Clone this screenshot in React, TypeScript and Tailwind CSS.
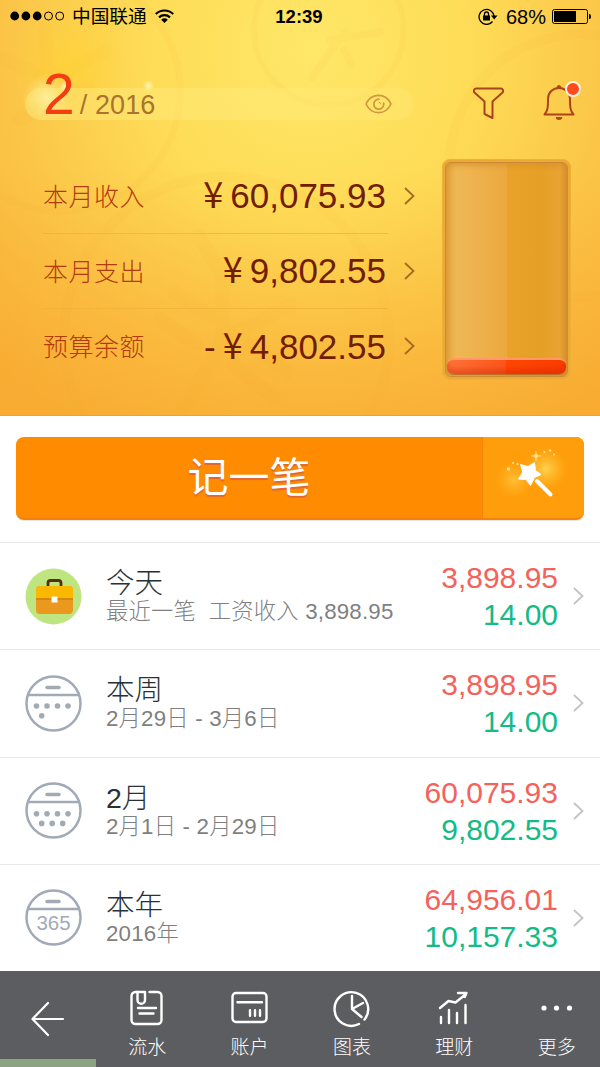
import type { ReactNode } from 'react';

interface SummaryRow {
  label: string;
  amount: string;
  negative?: boolean;
}

interface PeriodRow {
  title: string;
  detail: string;
  income: string;
  expense: string;
  icon: ReactNode;
}

const summary: SummaryRow[] = [
  { label: '本月收入', amount: '60,075.93' },
  { label: '本月支出', amount: '9,802.55' },
  { label: '预算余额', amount: '4,802.55', negative: true },
];

const periods: PeriodRow[] = [
  { title: '今天', detail: '最近一笔  工资收入 3,898.95', income: '3,898.95', expense: '14.00', icon: <BriefcaseIcon /> },
  {
    title: '本周',
    detail: '2月29日 - 3月6日',
    income: '3,898.95',
    expense: '14.00',
    icon: <CalendarIcon dots={[[11.5, 31], [22, 31], [32.5, 31], [43, 31], [16.7, 40.7]]} />,
  },
  {
    title: '2月',
    detail: '2月1日 - 2月29日',
    income: '60,075.93',
    expense: '9,802.55',
    icon: <CalendarIcon dots={[[11.5, 31.7], [22, 31.7], [32.5, 31.7], [43, 31.7], [16.7, 41.4], [27.2, 41.4], [37.7, 41.4]]} />,
  },
  { title: '本年', detail: '2016年', income: '64,956.01', expense: '10,157.33', icon: <CalendarIcon label="365" /> },
];

const tabs: { label: string; icon: ReactNode }[] = [
  {
    label: '流水',
    icon: (
      <>
        <path d="M10.5 4H8.5a4 4 0 0 0-4 4v24a4 4 0 0 0 4 4h22a4 4 0 0 0 4-4V8a4 4 0 0 0-4-4h-8" />
        <path d="M10.5 4h7.500v8a3.500 3.500 0 0 1-7.500 0z" />
        <path d="M11 20h18M12.500 25.500h14" />
      </>
    ),
  },
  {
    label: '账户',
    icon: (
      <>
        <rect x="2.5" y="5" width="34" height="29" rx="3.5" />
        <path d="M7.500 14.300h24.500M20 22.300v5.500M25 22.300v5.500M30 22.300v5.500" />
      </>
    ),
  },
  {
    label: '图表',
    icon: (
      <>
        <path d="M27 36A16.800 16.800 0 1 1 32.500 31.500" />
        <path d="M20 8v13l11-6M20 21l9.500 8" />
      </>
    ),
  },
  {
    label: '理财',
    icon: (
      <>
        <path d="M6 20l8.500-7 7 1.500L32 6M24 5h8.500l-1.700 4" />
        <path d="M7 29v6M15 22v13M23 25v10M31.500 17v18" />
      </>
    ),
  },
  {
    label: '更多',
    icon: (
      <g fill="currentColor" stroke="none">
        <circle cx="7" cy="20" r="2.600" />
        <circle cx="19.500" cy="20" r="2.600" />
        <circle cx="32.500" cy="20" r="2.600" />
      </g>
    ),
  },
];

export default function App() {
  return (
    <div className="flex h-[1067px] w-[600px] flex-col overflow-hidden bg-white font-['Liberation_Sans','Noto_Sans_CJK_SC',sans-serif]">
      <Header />

      {/* Add record */}
      <div className="h-[126px] shrink-0 px-4 pt-[21px]">
        <div className="flex h-[83px] overflow-hidden rounded-lg border-b-2 border-[#f8800c] bg-[#ff8c00] shadow-[0_1px_1px_rgba(0,0,0,0.12)]">
          <button className="flex-1 pt-[2px] text-[41px] leading-none font-normal text-white [text-shadow:0_2px_1px_#df6735]">
            记一笔
          </button>
          <button className="flex w-[102px] items-center justify-center border-l border-[#f48708] bg-[#ff9d0a]">
            <WandIcon />
          </button>
        </div>
      </div>

      <div className="flex shrink-0 flex-col">
        {periods.map((row) => (
          <PeriodItem key={row.title} row={row} />
        ))}
      </div>

      <TabBar />
    </div>
  );
}

function Header() {
  return (
    <div className="relative h-[416px] shrink-0 border-b border-[#f0a22b] bg-[radial-gradient(ellipse_430px_460px_at_310px_50px,#ffe768_0%,#fedc57_38%,#fbc446_72%,#f9b338_100%)]">
      <div className="absolute inset-0 bg-linear-to-b from-transparent from-40% to-[#f79b25]/35" />
      <HeaderPattern />
      <div className="relative">
        <StatusBar />

        <div className="flex h-[103px] pt-[33px] pl-[25px]">
          <div className="mt-[22px] flex h-8 w-[389px] items-center justify-between rounded-full bg-linear-to-r from-[#fff08a]/40 to-[#fff08a]/20 pr-[22px] pl-[18px]">
            <div className="flex items-baseline pt-[5px]">
              <span className="-mt-6 text-[57px] leading-none text-[#f43d14]">2</span>
              <span className="ml-[5px] text-[27px] leading-none tracking-[0.1px] text-[#a9742d]">/ 2016</span>
            </div>
            <svg className="h-5 w-[27px]" viewBox="0 0 27 20" fill="none" stroke="#d1963f" strokeWidth="1.7" strokeLinecap="round">
              <path d="M1 10C6.500-1.500 20.500-1.500 26 10 20.500 21.500 6.500 21.500 1 10z" />
              <path d="M14 5.200a5 5 0 1 0 4.700 4" />
              <path d="M14 8.200a2.500 2.500 0 0 1 1.800 1.800" strokeWidth="1" />
            </svg>
          </div>
          <svg className="mt-[21px] ml-[59px] h-8 w-[31px]" viewBox="0 0 31 32" fill="none" stroke="#ad431c" strokeWidth="2" strokeLinejoin="round">
            <path d="M4 1.500h23a2.500 2.500 0 0 1 2 4.500l-9.500 8.500V31l-8-4V14.500L2 6a2.500 2.500 0 0 1 2-4.500z" />
          </svg>
          <div className="relative mt-[15px] ml-[39px]">
            <svg className="h-10 w-8" viewBox="0 0 32 40" fill="none" stroke="#ad431c" strokeWidth="2" strokeLinejoin="round">
              <path d="M1.500 33.500c3.500-4 3.500-8 3.500-15.500C5 11.500 10 7 16 7s11 4.500 11 11c0 7.500 0 11.500 3.500 15.500z" />
              <path d="M14 6.500a2 2 0 0 1 4 0zM13 36.500h6a3 2 0 0 1-6 0z" fill="#ad431c" stroke="#ad431c" strokeWidth="0.8" />
            </svg>
            <span className="absolute top-0 left-[22px] h-4 w-4 rounded-full border-2 border-[#fff1dc] bg-[#ff4a20]" />
          </div>
        </div>

        <div className="flex pt-[23px] pl-[43px]">
          <div className="w-[345px] divide-y divide-[#eeb036]/70">
            {summary.map((row) => (
              <div key={row.label} className="flex h-[75px] items-center justify-between">
                <span className="pt-[3px] text-[25px] font-light tracking-[0.5px] text-[#b23b10]">{row.label}</span>
                <span className="flex items-center pr-[2px] pb-px text-[35px] leading-none text-[#721d00]">
                  {row.negative && <span className="mr-[7px]">-</span>}
                  <span className="mr-[7px] -mt-[7px] font-['Noto_Sans_CJK_SC',sans-serif] text-[36px] font-normal">¥</span>
                  {row.amount}
                </span>
              </div>
            ))}
          </div>
          <div className="ml-4">
            {summary.map((row) => (
              <div key={row.label} className="flex h-[75px] items-center pb-[2px]">
                <Chevron className="text-[#a46b20]" />
              </div>
            ))}
          </div>
          <BudgetGauge />
        </div>
      </div>
    </div>
  );
}

function HeaderPattern() {
  return (
    <svg className="absolute inset-0 h-full w-full" viewBox="0 0 600 416" fill="none">
      <defs>
        <radialGradient id="flare">
          <stop offset="0" stopColor="#fffbd0" stopOpacity="0.9" />
          <stop offset="1" stopColor="#fff3a0" stopOpacity="0" />
        </radialGradient>
        <radialGradient id="warm">
          <stop offset="0" stopColor="#ffd42d" stopOpacity="0.55" />
          <stop offset="1" stopColor="#ffd42d" stopOpacity="0" />
        </radialGradient>
      </defs>
      <g stroke="#e99b20" strokeOpacity="0.055" strokeWidth="10">
        <circle cx="226" cy="340" r="163" />
        <circle cx="582" cy="166" r="132" />
        <circle cx="329" cy="30" r="75" strokeWidth="6" />
        <circle cx="60" cy="92" r="120" strokeWidth="7" />
      </g>
      <g stroke="#e99b20" strokeOpacity="0.055" strokeLinecap="round" strokeWidth="14">
        <path d="M198 236l24 40v65l-42 75M222 341l68-35M175 294l38 24M160 320l36 25M250 345l38 28M232 365l42 34" />
        <path d="M0 58l60 25M45 65l0-35M60 75l45-24M18 120l70-33" />
        <path d="M312 78l32-45M330 40l50-8M344 50l7 14" strokeWidth="8" />
      </g>
      <circle cx="70" cy="65" r="60" fill="url(#warm)" />
      <circle cx="46" cy="98" r="24" fill="url(#flare)" opacity="0.75" />
      <circle cx="65" cy="87" r="7" fill="url(#flare)" />
      <circle cx="148" cy="86" r="6" fill="url(#flare)" />
    </svg>
  );
}

function StatusBar() {
  return (
    <div className="grid h-[33px] grid-cols-3 items-center px-[10px] text-black">
      <div className="flex items-center">
        <svg className="h-[10px] w-[55px]" viewBox="0 0 55 10" fill="none" stroke="currentColor">
          <circle cx="4.700" cy="5" r="4.400" fill="currentColor" stroke="none" />
          <circle cx="15.900" cy="5" r="4.400" fill="currentColor" stroke="none" />
          <circle cx="27.200" cy="5" r="4.400" fill="currentColor" stroke="none" />
          <circle cx="38.500" cy="5" r="4" />
          <circle cx="49.700" cy="5" r="4" />
        </svg>
        <span className="ml-[7px] pt-[2px] text-[18.700px] leading-none font-normal">中国联通</span>
        <svg className="ml-[8px] h-[14px] w-[19px]" viewBox="0 0 19 14" fill="none" stroke="currentColor" strokeWidth="2.200">
          <path d="M0.800 5a12.500 12.500 0 0 1 17.400 0M4 8.400a8 8 0 0 1 11 0" />
          <path d="M9.500 14L6.200 10.700a4.700 4.700 0 0 1 6.600 0z" fill="currentColor" stroke="none" />
        </svg>
      </div>
      <span className="pt-px pr-[2px] text-center text-[18.500px] leading-none font-bold">12:39</span>
      <div className="-mr-px flex items-center justify-end">
        <svg className="h-[17px] w-5" viewBox="0 0 20 17" fill="none" stroke="currentColor" strokeWidth="1.300">
          <path d="M14.500 13.500A7.500 7.500 0 1 1 16 8" />
          <path d="M13 7.500h6.500l-3.300 4z" fill="currentColor" stroke="none" />
          <rect x="5" y="7.500" width="7" height="5" fill="currentColor" stroke="none" />
          <path d="M6.500 8V6a2 2 0 0 1 4 0v2" />
        </svg>
        <span className="ml-[8px] text-[20px] leading-none">68%</span>
        <svg className="ml-[6px] h-[15px] w-[39px]" viewBox="0 0 39 15" fill="none">
          <rect x="0.500" y="0.500" width="35" height="14" rx="2" stroke="currentColor" />
          <rect x="2" y="2" width="22" height="11" fill="currentColor" />
          <path d="M37 5h0.500a1.500 2.500 0 0 1 0 5H37z" fill="currentColor" />
        </svg>
      </div>
    </div>
  );
}

function BudgetGauge() {
  return (
    <div className="ml-[27px] h-[221px] w-[129px] rounded-lg border border-[#efb03b] bg-[#ebaa35] p-[2px]">
      <div className="flex h-full flex-col justify-end overflow-hidden rounded-md border border-[#d08a35] bg-[linear-gradient(90deg,#e6a743_0%,#efb855_9%,#edb04a_30%,#eba93e_50%,#eaa329_50%,#e69f26_80%,#e9a334_94%,#db9130_100%)] px-px pb-[2px] shadow-[inset_0_1px_7px_#d28d2b]">
        <div className="h-4 rounded-[7px] border-t-2 border-[#ff9a68] bg-[linear-gradient(90deg,#fe7338_0%,#fb551a_50%,#ff4700_50%,#f93d00_100%)] shadow-[inset_0_-5px_5px_rgba(202,25,0,0.35),0_1px_1px_#b66b20]" />
      </div>
    </div>
  );
}

function PeriodItem({ row }: { row: PeriodRow }) {
  return (
    <div className="flex h-[107.250px] items-center border-t-[1.500px] border-[#e9e9e9] pr-4 pl-[25px]">
      <div className="h-[57px] w-[57px]">{row.icon}</div>
      <div className="ml-6 flex-1 pt-px">
        <div className="text-[28.500px] leading-[30px] font-light text-[#283236]">{row.title}</div>
        <div className="text-[22.300px] leading-[27px] font-light tracking-[0.200px] whitespace-pre text-[#7f7f7f]">{row.detail}</div>
      </div>
      <div className="text-right text-[30px] leading-[37px]">
        <div className="text-[#f4625b]">{row.income}</div>
        <div className="text-[#13bb86]">{row.expense}</div>
      </div>
      <Chevron className="ml-[15px] text-[#c3c3c3]" />
    </div>
  );
}

function TabBar() {
  return (
    <div className="relative flex h-24 shrink-0 bg-[#5c5d60] text-white">
      <button className="flex w-24 shrink-0 items-center justify-center">
        <svg className="h-9 w-[34px]" viewBox="0 0 34 36" fill="none" stroke="currentColor" strokeWidth="2.200" strokeLinecap="round" strokeLinejoin="round">
          <path d="M17 2L1.500 18 17 34M2 18h30" />
        </svg>
      </button>
      {tabs.map((tab) => (
        <button key={tab.label} className="flex w-[102.400px] shrink-0 flex-col items-center pt-[17px]">
          <svg className="h-10 w-10" viewBox="0 0 40 40" fill="none" stroke="currentColor" strokeWidth="2.400" strokeLinecap="round" strokeLinejoin="round">
            {tab.icon}
          </svg>
          <span className="mt-[9px] text-[19px] leading-[22px] font-light">{tab.label}</span>
        </button>
      ))}
      <div className="absolute bottom-0 left-0 h-2 w-24 bg-[#8aa381]" />
    </div>
  );
}

function Chevron({ className }: { className: string }) {
  return (
    <svg className={`h-[18px] w-[11px] shrink-0 ${className}`} viewBox="0 0 11 18" fill="none" stroke="currentColor" strokeWidth="1.800">
      <path d="M1 1l8.500 8L1 17" />
    </svg>
  );
}

function CalendarIcon({ dots = [], label }: { dots?: number[][]; label?: string }) {
  return (
    <svg className="h-full w-full" viewBox="0 0 57 57" fill="none" stroke="#a2aab6" strokeWidth="2.500">
      <circle cx="28.500" cy="28.500" r="27" />
      <path d="M3.500 20h50" />
      <path d="M22 12.500h12" strokeWidth="3.500" strokeLinecap="round" />
      {dots.map(([x, y]) => (
        <circle key={`${x}-${y}`} cx={x} cy={y} r="2.800" fill="#a2aab6" stroke="none" />
      ))}
      {label && (
        <text x="28.500" y="41" textAnchor="middle" fontSize="20.500" fill="#a2aab6" stroke="none">
          {label}
        </text>
      )}
    </svg>
  );
}

function BriefcaseIcon() {
  return (
    <svg className="h-full w-full" viewBox="0 0 57 57" fill="none">
      <circle cx="28.500" cy="28.500" r="28" fill="#bee57f" />
      <path d="M23 19v-4a2.500 2.500 0 0 1 2.500-2.500h8A2.500 2.500 0 0 1 36 15v4" stroke="#573012" strokeWidth="2.800" />
      <rect x="11" y="18" width="37" height="28" rx="4" fill="#eb991e" />
      <path d="M11 30v-8a4 4 0 0 1 4-4h29a4 4 0 0 1 4 4v8z" fill="#fbb800" />
      <path d="M11 30h37v2H11z" fill="#d9860e" />
      <rect x="26.500" y="28.500" width="6" height="6" rx="0.500" fill="#fff" />
    </svg>
  );
}

function WandIcon() {
  return (
    <svg className="h-[81px] w-[100px]" viewBox="0 0 100 81">
      <defs>
        <radialGradient id="glow">
          <stop offset="0" stopColor="#ffd552" stopOpacity="0.95" />
          <stop offset="1" stopColor="#ffba27" stopOpacity="0" />
        </radialGradient>
      </defs>
      <circle cx="62" cy="32" r="22" fill="url(#glow)" />
      <circle cx="30" cy="43" r="20" fill="url(#glow)" opacity="0.65" />
      <path
        d="M50.500 25.500l1 8 5.500 4-6.500 3-4 8-4.500-6-7.500-.5 4.300-7-2.300-7.500 7.500 2z"
        fill="#fff"
        stroke="#fff"
        strokeLinejoin="round"
      />
      <path d="M53 44l13.500 13.500" stroke="#fff" strokeWidth="4" strokeLinecap="round" />
      <path d="M52 14v10M47 19h10" stroke="#ffe38a" strokeWidth="1" />
      <g fill="#ffe38a">
        <circle cx="52" cy="19" r="2" />
        <circle cx="60.500" cy="15" r="1" />
        <circle cx="66" cy="13.500" r="1.200" />
        <circle cx="70" cy="17.500" r="1" />
        <circle cx="24.500" cy="32" r="1.700" />
        <circle cx="29" cy="26" r="1.100" />
        <circle cx="33.500" cy="27" r="1.100" />
      </g>
    </svg>
  );
}
